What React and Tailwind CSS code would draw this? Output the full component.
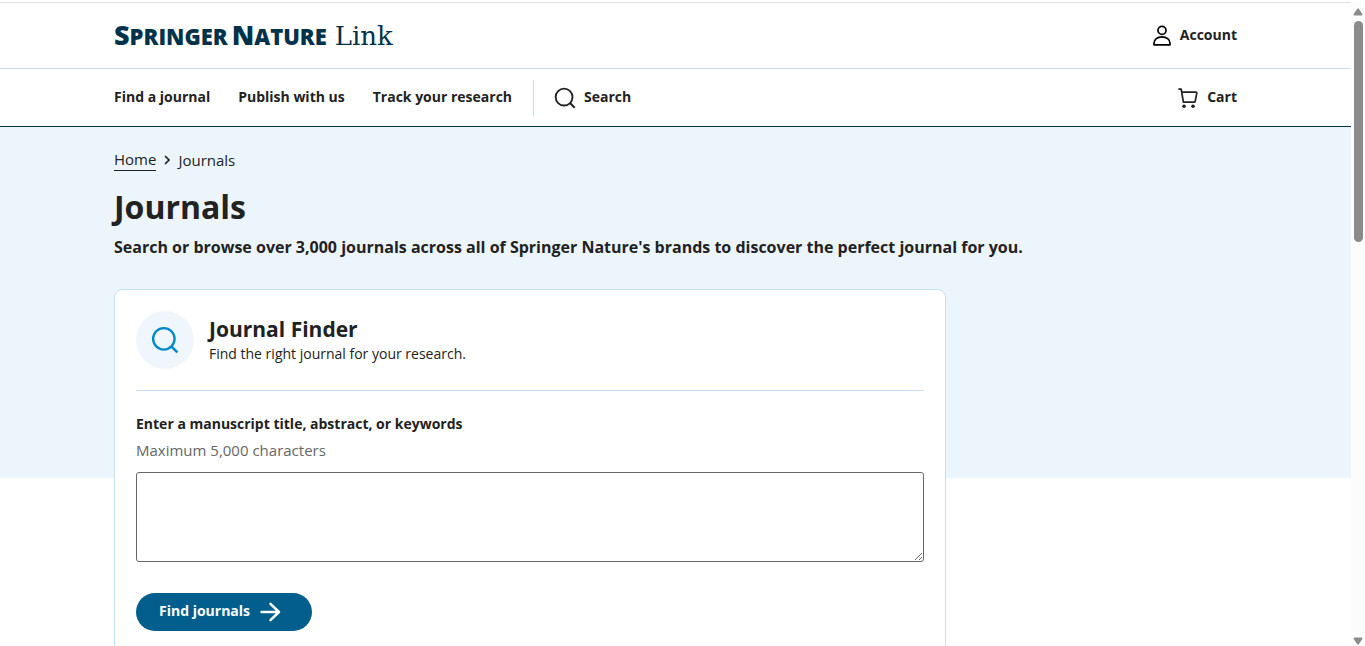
function SearchIcon({ className }) {
  return (
    <svg viewBox="0 0 24 24" fill="none" stroke="currentColor" strokeWidth="2" className={className} aria-hidden="true">
      <circle cx="11" cy="11" r="9.2" />
      <path d="M17.4 17.4 22.6 22.6" strokeWidth="2.2" />
    </svg>
  );
}

function UserIcon({ className }) {
  return (
    <svg viewBox="0 0 20 22" fill="none" stroke="currentColor" strokeWidth="1.7" className={className} aria-hidden="true">
      <circle cx="10" cy="5.4" r="4" />
      <path d="M2 19.8V18.3C2 14.6 5.4 11.8 10 11.8S18 14.6 18 18.3V19.8Z" strokeLinejoin="round" />
    </svg>
  );
}

function CartIcon({ className }) {
  return (
    <svg viewBox="0 0 22 22" fill="none" stroke="currentColor" strokeWidth="1.7" className={className} aria-hidden="true">
      <path d="M1.4 2.2H4.2L6.4 15.2H17Q18 15.2 18.2 14.3L19.8 6.2Q19.9 5.2 19 5.2H4.8" strokeLinejoin="round" />
      <circle cx="7" cy="19.2" r="1.8" fill="currentColor" stroke="none" />
      <circle cx="16" cy="19.2" r="1.8" fill="currentColor" stroke="none" />
    </svg>
  );
}

function Logo() {
  return (
    <a href="#home" className="flex items-baseline text-[#01324b]">
      <span className="flex items-baseline gap-1 text-[22px] leading-8 font-extrabold">
        <span><span className="text-[27px]">S</span>PRINGER</span>
        <span><span className="text-[27px]">N</span>ATURE</span>
      </span>
      <span className="ml-2 font-['DejaVu_Serif',serif] text-[26px] leading-8 font-normal">Link</span>
    </a>
  );
}

function Header() {
  return (
    <header className="border-t border-[#dfe1e4] text-[14px] leading-6 font-bold">
      <div className="flex h-[66px] items-center justify-between border-b border-[#c5e0f4] px-[114px]">
        <Logo />
        <a href="#account" className="flex items-center gap-2">
          <UserIcon className="h-[22px] w-5 text-black" />
          <span className="mb-[2px]">Account</span>
        </a>
      </div>
      <div className="flex h-[58px] items-center justify-between border-b border-[#01324b] px-[114px]">
        <nav className="flex items-center">
          <div className="mb-[2px] flex gap-7">
            <a href="#find">Find a journal</a>
            <a href="#publish">Publish with us</a>
            <a href="#track">Track your research</a>
          </div>
          <a href="#search" className="ml-[21px] flex h-9 items-center gap-2 border-l border-[#c5e0f4] pl-5">
            <SearchIcon className="size-[22px]" />
            <span className="mb-[2px]">Search</span>
          </a>
        </nav>
        <a href="#cart" className="flex items-center gap-2">
          <CartIcon className="size-[22px]" />
          <span className="mb-[2px]">Cart</span>
        </a>
      </div>
    </header>
  );
}

function JournalFinder() {
  return (
    <section className="mt-[30px] max-w-[832px] rounded-lg border border-[#c5e0f4] bg-white px-[21px] pt-[21px] pb-8">
      <div className="flex items-center gap-[15px] border-b border-[#c5e0f4] pb-[21px]">
        <div className="flex size-[58px] items-center justify-center rounded-full bg-[#eff6fc] text-[#0088cc]">
          <SearchIcon className="size-7" />
        </div>
        <div>
          <h2 className="text-[21px] leading-7 font-bold">Journal Finder</h2>
          <p className="text-[14px] leading-[22px]">Find the right journal for your research.</p>
        </div>
      </div>
      <form className="pt-5" onSubmit={(e) => e.preventDefault()}>
        <label htmlFor="manuscript" className="block text-[14px] leading-[26px] font-bold">
          Enter a manuscript title, abstract, or keywords
        </label>
        <p id="manuscript-hint" className="text-[15px] leading-[26px] text-[#666]">Maximum 5,000 characters</p>
        <textarea
          id="manuscript"
          aria-describedby="manuscript-hint"
          maxLength={5000}
          className="mt-[9px] block h-[90px] w-full resize rounded-[3px] border border-[#666] bg-white p-2"
        />
        <button
          type="submit"
          className="mt-[31px] flex h-[38px] w-44 items-center gap-2 rounded-full bg-[#025e8d] pl-[23px] text-[14px] leading-6 font-bold text-white"
        >
          <span className="mb-[2px]">Find journals</span>
          <svg viewBox="0 0 24 24" className="size-6" fill="none" stroke="currentColor" strokeWidth="2.5" strokeLinecap="round" strokeLinejoin="round" aria-hidden="true">
            <path d="M3.5 12H21M12.5 3.8 21 12 12.5 20.2" />
          </svg>
        </button>
      </form>
    </section>
  );
}

function Scrollbar() {
  return (
    <div className="flex w-[14px] shrink-0 flex-col items-center bg-[#fcfcfc] pt-[6px] text-[#8b8b8b]" aria-hidden="true">
      <svg viewBox="0 0 10 8" className="h-2 w-[10px]" fill="currentColor">
        <path d="M4.2.8Q5 0 5.8.8L9.3 6Q9.8 7.5 8.6 7.5H1.4Q.2 7.5.7 6Z" />
      </svg>
      <div className="mt-[5px] h-[221px] w-[9px] rounded-full bg-[#8b8b8b]" />
      <svg viewBox="0 0 10 8" className="mt-auto mb-px h-2 w-[10px]" fill="currentColor">
        <path d="M4.2 7.2Q5 8 5.8 7.2L9.3 2Q9.8.5 8.6.5H1.4Q.2.5.7 2Z" />
      </svg>
    </div>
  );
}

export default function App() {
  return (
    <div className="flex h-screen overflow-hidden bg-white pt-[2px] font-['Open_Sans',sans-serif] text-[#222]">
      <div className="min-w-0 flex-1 overflow-hidden">
        <Header />
        <main className="bg-[linear-gradient(#edf5fc_351px,#fff_351px)] px-[114px] pt-[21px]">
          <nav aria-label="Breadcrumb" className="flex items-center gap-2 text-[15px] leading-[22px]">
            <a href="#home" className="border-b border-[#222]">Home</a>
            <svg viewBox="0 0 6 10" className="h-[10px] w-[6px]" fill="none" stroke="currentColor" strokeWidth="1.7" aria-hidden="true">
              <path d="M1 1 5 5 1 9" />
            </svg>
            <span>Journals</span>
          </nav>
          <h1 className="mt-3 text-[32px] leading-[48px] font-bold">Journals</h1>
          <p className="mt-1 text-[16px] leading-6 font-bold">
            Search or browse over 3,000 journals across all of Springer Nature's brands to discover the perfect journal for you.
          </p>
          <JournalFinder />
        </main>
      </div>
      <Scrollbar />
    </div>
  );
}
